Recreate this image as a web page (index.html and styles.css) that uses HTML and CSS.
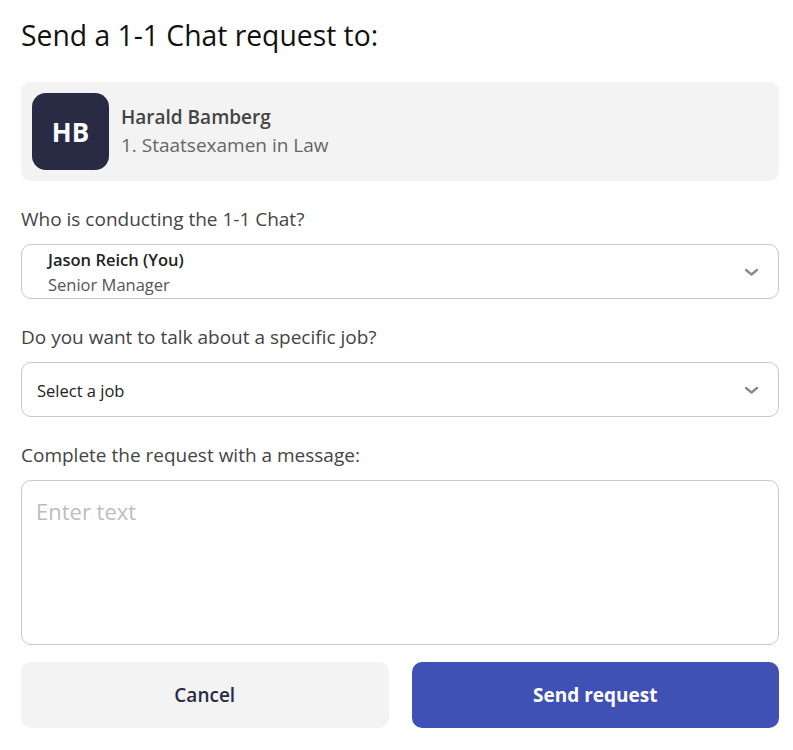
FILE: index.html
```html
<!DOCTYPE html>
<html>
<head>
<meta charset="utf-8">
<link rel="stylesheet" href="styles.css">
</head>
<body>
<div class="dialog">
  <h1 class="title">Send a 1-1 Chat request to:</h1>
  <div class="person">
    <div class="avatar">HB</div>
    <div class="person-info">
      <div class="person-name">Harald Bamberg</div>
      <div class="person-sub">1. Staatsexamen in Law</div>
    </div>
  </div>
  <div class="label label-first">Who is conducting the 1-1 Chat?</div>
  <div class="select select-two">
    <div class="select-text">
      <div class="sel-name">Jason Reich (You)</div>
      <div class="sel-sub">Senior Manager</div>
    </div>
    <svg class="chev" width="15" height="9" viewBox="0 0 15 9"><path d="M2 2 L7.5 6.5 L13 2" fill="none" stroke="#8a8a8a" stroke-width="2.3" stroke-linecap="round" stroke-linejoin="round"/></svg>
  </div>
  <div class="label">Do you want to talk about a specific job?</div>
  <div class="select select-one">
    <div class="select-text">Select a job</div>
    <svg class="chev" width="15" height="9" viewBox="0 0 15 9"><path d="M2 2 L7.5 6.5 L13 2" fill="none" stroke="#8a8a8a" stroke-width="2.3" stroke-linecap="round" stroke-linejoin="round"/></svg>
  </div>
  <div class="label">Complete the request with a message:</div>
  <div class="textarea"><span class="placeholder">Enter text</span></div>
  <div class="buttons">
    <button class="btn btn-cancel">Cancel</button>
    <button class="btn btn-send">Send request</button>
  </div>
</div>
</body>
</html>
```
FILE: styles.css
```css
html, body {
  margin: 0;
  padding: 0;
  background: #fff;
}
body {
  font-family: "Open Sans", "Noto Sans", sans-serif;
  color: #444;
}
.dialog {
  padding: 17px 14px 0 21px;
  display: flex;
  flex-direction: column;
}
.title {
  margin: 0;
  font-size: 28.3px;
  font-weight: 500;
  color: #111;
  line-height: 36px;
}
.person {
  margin-top: 29px;
  background: #f3f3f3;
  border-radius: 10px;
  height: 99px;
  display: flex;
  align-items: center;
  padding-left: 11px;
  box-sizing: border-box;
}
.avatar {
  width: 77px;
  height: 77px;
  border-radius: 14px;
  background: #292b45;
  color: #fff;
  font-size: 26px;
  font-weight: 700;
  display: flex;
  align-items: center;
  justify-content: center;
  flex-shrink: 0;
}
.person-info {
  margin-left: 12px;
  display: flex;
  flex-direction: column;
  gap: 3px;
}
.person-name {
  font-size: 19px;
  font-weight: 600;
  color: #444;
  line-height: 25px;
}
.person-sub {
  font-size: 19px;
  color: #666;
  line-height: 25px;
}
.label {
  font-size: 19px;
  color: #444;
  line-height: 26px;
  margin-top: 25px;
  margin-bottom: 12px;
}
.select {
  height: 55px;
  border: 1px solid #c8c8c8;
  border-radius: 10px;
  box-sizing: border-box;
  display: flex;
  align-items: center;
  justify-content: space-between;
  padding-right: 19px;
}
.select-two .select-text {
  padding-left: 26px;
  margin-top: 2px;
}
.sel-name {
  font-size: 16.5px;
  font-weight: 600;
  color: #222;
  line-height: 24px;
}
.sel-sub {
  font-size: 16.5px;
  color: #555;
  line-height: 25px;
}
.select-one .select-text {
  padding-left: 15px;
  font-size: 16.5px;
  color: #222;
  margin-top: 2px;
}
.chev {
  display: block;
  margin-top: 2px;
}
.textarea {
  height: 165px;
  border: 1px solid #c8c8c8;
  border-radius: 10px;
  box-sizing: border-box;
  padding: 15px 14px;
}
.placeholder {
  font-size: 22px;
  color: #bdbdbd;
  line-height: 30px;
}
.buttons {
  margin-top: 17px;
  display: flex;
  gap: 23px;
}
.btn {
  flex: 1;
  height: 66px;
  border: none;
  border-radius: 10px;
  font-family: "Open Sans", "Noto Sans", sans-serif;
  font-size: 19px;
}
.btn-cancel {
  background: #f3f3f3;
  color: #2a2c45;
  font-weight: 600;
}
.btn-send {
  background: #3f51b5;
  color: #fff;
  font-weight: 700;
}
```
